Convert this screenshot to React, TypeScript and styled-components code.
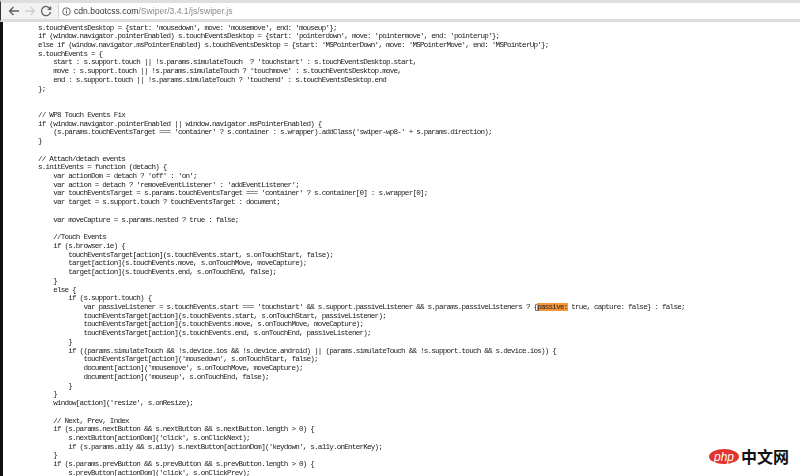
import styled, { createGlobalStyle } from 'styled-components';

const GlobalStyle = createGlobalStyle`
    html, body {
        margin: 0;
        padding: 0;
        height: 100%;
        background: #fff;
    }
`;

const Page = styled.div`
    width: 800px;
    height: 476px;
    display: flex;
    flex-direction: column;
    overflow: hidden;
    position: relative;
    background: #fff;
`;

const Toolbar = styled.div`
    height: 16px;
    flex: none;
    display: flex;
    align-items: center;
    padding-left: 6px;
    background: #f2f2f2;
    border-top: 3px solid #dedede;
    border-bottom: 3px solid #dcdcdc;
    border-left: 1px solid #333;
`;

const NavIcon = styled.svg<{ $dim?: boolean }>`
    width: 14px;
    height: 14px;
    flex: none;
    margin-right: 2px;
    fill: none;
    stroke: ${(props) => (props.$dim ? '#cfcfcf' : '#5f5f5f')};
    stroke-width: 1.3;
`;

const AddressBar = styled.div`
    flex: 1;
    height: 16px;
    margin-left: 3px;
    display: flex;
    align-items: center;
    gap: 3px;
    padding-left: 3px;
    background: #fff;
    border-left: 1px solid #d2d2d2;
    border-radius: 2px 0 0 2px;
    font-family: "Liberation Sans", sans-serif;
    font-size: 8.6px;
    filter: blur(0.25px);
`;

const Host = styled.span`
    color: #333;
`;

const UrlPath = styled.span`
    color: #8a8a8a;
`;

const Body = styled.div`
    flex: 1;
    display: flex;
    min-height: 0;
`;

const LeftEdge = styled.div`
    width: 3px;
    flex: none;
    background: #111;
`;

const Code = styled.pre`
    margin: 0;
    padding: 1.5px 0 0 35px;
    font-family: "Liberation Mono", monospace;
    font-size: 7.6px;
    letter-spacing: -0.775px;
    line-height: 8.73px;
    color: #222;
    filter: blur(0.35px);
`;

const Highlight = styled.span`
    background: #f7973a;
`;

const Watermark = styled.div`
    position: absolute;
    right: 11px;
    bottom: 12px;
    display: flex;
    align-items: center;
    gap: 2px;
`;

const PhpBadge = styled.span`
    width: 30px;
    height: 15px;
    border-radius: 50%;
    background: #e0342c;
    color: #fff;
    display: flex;
    align-items: center;
    justify-content: center;
    font-family: "Liberation Sans", sans-serif;
    font-style: italic;
    font-size: 12px;
`;

const SiteName = styled.span`
    font-family: "Noto Sans CJK SC", sans-serif;
    font-weight: 700;
    font-size: 16px;
    line-height: 15px;
    color: #111;
`;

const codeBefore = `s.touchEventsDesktop = {start: 'mousedown', move: 'mousemove', end: 'mouseup'};
if (window.navigator.pointerEnabled) s.touchEventsDesktop = {start: 'pointerdown', move: 'pointermove', end: 'pointerup'};
else if (window.navigator.msPointerEnabled) s.touchEventsDesktop = {start: 'MSPointerDown', move: 'MSPointerMove', end: 'MSPointerUp'};
s.touchEvents = {
    start : s.support.touch || !s.params.simulateTouch  ? 'touchstart' : s.touchEventsDesktop.start,
    move : s.support.touch || !s.params.simulateTouch ? 'touchmove' : s.touchEventsDesktop.move,
    end : s.support.touch || !s.params.simulateTouch ? 'touchend' : s.touchEventsDesktop.end
};


// WP8 Touch Events Fix
if (window.navigator.pointerEnabled || window.navigator.msPointerEnabled) {
    (s.params.touchEventsTarget === 'container' ? s.container : s.wrapper).addClass('swiper-wp8-' + s.params.direction);
}

// Attach/detach events
s.initEvents = function (detach) {
    var actionDom = detach ? 'off' : 'on';
    var action = detach ? 'removeEventListener' : 'addEventListener';
    var touchEventsTarget = s.params.touchEventsTarget === 'container' ? s.container[0] : s.wrapper[0];
    var target = s.support.touch ? touchEventsTarget : document;

    var moveCapture = s.params.nested ? true : false;

    //Touch Events
    if (s.browser.ie) {
        touchEventsTarget[action](s.touchEvents.start, s.onTouchStart, false);
        target[action](s.touchEvents.move, s.onTouchMove, moveCapture);
        target[action](s.touchEvents.end, s.onTouchEnd, false);
    }
    else {
        if (s.support.touch) {
            var passiveListener = s.touchEvents.start === 'touchstart' && s.support.passiveListener && s.params.passiveListeners ? {`;

const codeAfter = ` true, capture: false} : false;
            touchEventsTarget[action](s.touchEvents.start, s.onTouchStart, passiveListener);
            touchEventsTarget[action](s.touchEvents.move, s.onTouchMove, moveCapture);
            touchEventsTarget[action](s.touchEvents.end, s.onTouchEnd, passiveListener);
        }
        if ((params.simulateTouch && !s.device.ios && !s.device.android) || (params.simulateTouch && !s.support.touch && s.device.ios)) {
            touchEventsTarget[action]('mousedown', s.onTouchStart, false);
            document[action]('mousemove', s.onTouchMove, moveCapture);
            document[action]('mouseup', s.onTouchEnd, false);
        }
    }
    window[action]('resize', s.onResize);

    // Next, Prev, Index
    if (s.params.nextButton && s.nextButton && s.nextButton.length > 0) {
        s.nextButton[actionDom]('click', s.onClickNext);
        if (s.params.a11y && s.a11y) s.nextButton[actionDom]('keydown', s.a11y.onEnterKey);
    }
    if (s.params.prevButton && s.prevButton && s.prevButton.length > 0) {
        s.prevButton[actionDom]('click', s.onClickPrev);`;

const App = () => {
    return (
        <Page>
            <GlobalStyle />
            <Toolbar>
                <NavIcon viewBox="0 0 14 14">
                    <path d="M12 7H2.5M6.5 3L2.5 7l4 4" />
                </NavIcon>
                <NavIcon viewBox="0 0 14 14" $dim>
                    <path d="M2 7h9.5M7.5 3l4 4-4 4" />
                </NavIcon>
                <NavIcon viewBox="0 0 14 14">
                    <path d="M11.2 5A4.6 4.6 0 1 0 11.6 8M11.6 2.4V5.4H8.6" />
                </NavIcon>
                <AddressBar>
                    <svg width="9" height="9" viewBox="0 0 10 10" fill="none" stroke="#555">
                        <circle cx="5" cy="5" r="4.2" />
                        <path d="M5 4.2v3M5 2.4v1" />
                    </svg>
                    <span>
                        <Host>cdn.bootcss.com</Host>
                        <UrlPath>/Swiper/3.4.1/js/swiper.js</UrlPath>
                    </span>
                </AddressBar>
            </Toolbar>
            <Body>
                <LeftEdge />
                <Code>
                    {codeBefore}
                    <Highlight>passive:</Highlight>
                    {codeAfter}
                </Code>
            </Body>
            <Watermark>
                <PhpBadge>php</PhpBadge>
                <SiteName>中文网</SiteName>
            </Watermark>
        </Page>
    );
};

export default App;
